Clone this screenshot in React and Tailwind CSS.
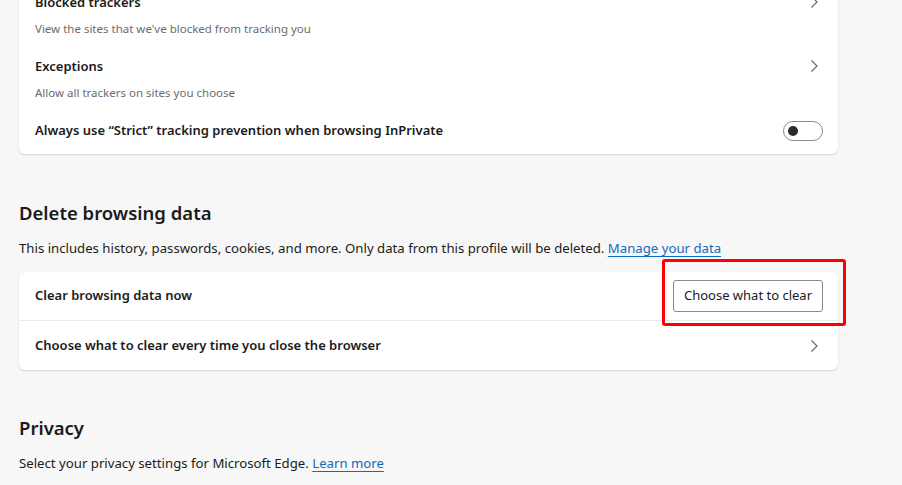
const font = { fontFamily: '"Noto Sans", "Open Sans", sans-serif' }

function Chevron() {
  return (
    <svg width="16" height="16" viewBox="0 0 16 16" className="text-[#616161]">
      <path d="M5.5 2.5 L11 8 L5.5 13.5" fill="none" stroke="currentColor" strokeWidth="1.1" />
    </svg>
  )
}

function NavRow({ title, desc }) {
  return (
    <div className="flex items-center justify-between h-[64px] pl-4 pr-4">
      <div>
        <div className="text-[13px] font-semibold text-[#1b1b1b] leading-5">{title}</div>
        <div className="mt-[9px] text-[11.5px] text-[#6b6b6b] leading-4">{desc}</div>
      </div>
      <div className="self-start mt-[12px]">
        <Chevron />
      </div>
    </div>
  )
}

export default function App() {
  return (
    <div
      className="relative h-[485px] w-full overflow-hidden bg-[#f7f7f7] pl-[19px]"
      style={font}
    >
      <div className="w-[819px]">
        <div className="-mt-[18px] rounded-md bg-white shadow-[0_1px_2px_rgba(0,0,0,0.14)]">
          <NavRow
            title="Blocked trackers"
            desc="View the sites that we've blocked from tracking you"
          />
          <NavRow title="Exceptions" desc="Allow all trackers on sites you choose" />
          <div className="flex items-center justify-between h-[44px] pb-[3px] pl-4 pr-[15px]">
            <span className="text-[13px] font-semibold text-[#1b1b1b]">
              Always use “Strict” tracking prevention when browsing InPrivate
            </span>
            <div className="flex h-[20px] w-[40px] items-center rounded-full border border-[#8a8a8a] bg-white pl-[4px]">
              <div className="h-[10px] w-[10px] rounded-full bg-[#2b2b2b]" />
            </div>
          </div>
        </div>

        <h2 className="mt-[47px] text-[18.5px] font-semibold leading-6 text-[#1b1b1b]">
          Delete browsing data
        </h2>
        <p className="mt-[13px] text-[13.2px] leading-5 text-[#1b1b1b]">
          This includes history, passwords, cookies, and more. Only data from this profile
          will be deleted.{' '}
          <a className="text-[#0f6cbd] underline underline-offset-[3px]" href="#">
            Manage your data
          </a>
        </p>

        <div className="mt-[14px] rounded-md bg-white shadow-[0_1px_2px_rgba(0,0,0,0.14)]">
          <div className="flex h-[49px] items-center justify-between pl-4 pr-[15px] border-b border-[#ebebeb]">
            <span className="text-[13px] font-semibold text-[#1b1b1b]">
              Clear browsing data now
            </span>
            <button className="h-[32px] w-[150px] rounded-[3px] border border-[#8a8a8a] bg-white text-[13px] text-[#1b1b1b]">
              Choose what to clear
            </button>
          </div>
          <div className="flex h-[49px] items-center justify-between pl-4 pr-4">
            <span className="text-[13px] font-semibold text-[#1b1b1b]">
              Choose what to clear every time you close the browser
            </span>
            <Chevron />
          </div>
        </div>

        <h2 className="mt-[46px] text-[18.5px] font-semibold leading-6 text-[#1b1b1b]">
          Privacy
        </h2>
        <p className="mt-[13px] text-[13.2px] leading-5 text-[#1b1b1b]">
          Select your privacy settings for Microsoft Edge.{' '}
          <a className="text-[#0f6cbd] underline underline-offset-[3px]" href="#">
            Learn more
          </a>
        </p>
      </div>

      <div className="absolute left-[662px] top-[259px] h-[67px] w-[184px] rounded-[3px] border-[3px] border-[#ff0000]" />
    </div>
  )
}
